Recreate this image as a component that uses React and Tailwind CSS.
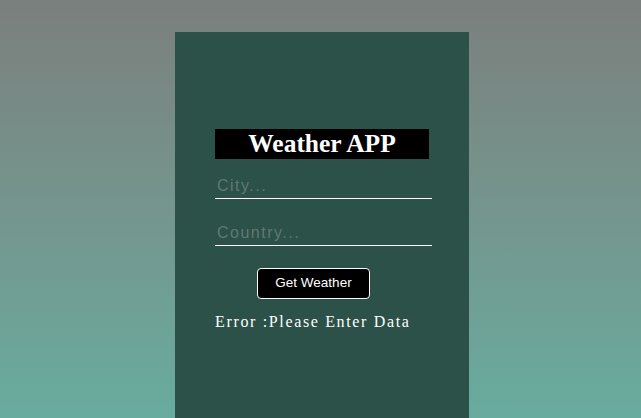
export default function App() {
  return (
    <div className="h-[418px] w-full overflow-hidden bg-gradient-to-b from-[#7b7f7d] to-[#68ac9f]">
      <div className="ml-[175px] mt-[32px] flex h-[386px] w-[294px] flex-col items-start bg-[#2c5148] pl-[40px] pt-[97px]">
        <h1 className="flex h-[30px] w-[214px] items-center justify-center bg-black font-['Liberation_Serif',serif] text-[25.5px] font-bold leading-none text-white">
          Weather APP
        </h1>
        <input
          placeholder="City..."
          className="mt-[16px] block h-[24px] w-[217px] border-b border-white bg-transparent pb-[2px] pl-[2px] font-['Liberation_Sans',Arial,sans-serif] text-[16px] tracking-[1.5px] text-white outline-none placeholder:text-[#5e7a72]"
        />
        <input
          placeholder="Country..."
          className="mt-[23px] block h-[24px] w-[217px] border-b border-white bg-transparent pb-[2px] pl-[2px] font-['Liberation_Sans',Arial,sans-serif] text-[16px] tracking-[1.5px] text-white outline-none placeholder:text-[#5e7a72]"
        />
        <button className="ml-[42px] mt-[22px] block h-[31px] w-[113px] rounded-[4px] border border-white bg-black font-['Liberation_Sans',Arial,sans-serif] text-[13.5px] text-white">
          Get Weather
        </button>
        <p className="mt-[13px] font-['Liberation_Serif',serif] text-[16px] leading-[20px] tracking-[1.65px] text-white">
          Error :Please Enter Data
        </p>
      </div>
    </div>
  );
}
